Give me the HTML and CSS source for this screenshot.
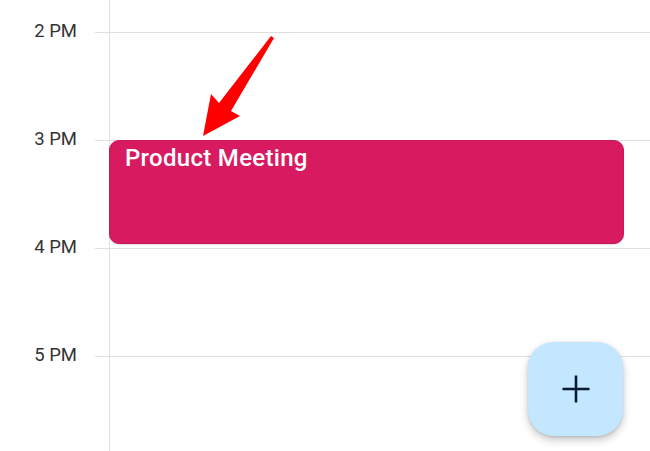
FILE: index.html
```html
<!DOCTYPE html>
<html>
<head>
<meta charset="utf-8">
<link rel="stylesheet" href="styles.css">
</head>
<body>
<div class="cal">
  <div class="hour spacer">
    <div class="label"></div>
    <div class="tick none"></div>
    <div class="slot none"></div>
  </div>
  <div class="hour">
    <div class="label">2 PM</div>
    <div class="tick"></div>
    <div class="slot"></div>
  </div>
  <div class="hour">
    <div class="label">3 PM</div>
    <div class="tick"></div>
    <div class="slot">
      <div class="event">Product Meeting</div>
    </div>
  </div>
  <div class="hour">
    <div class="label">4 PM</div>
    <div class="tick"></div>
    <div class="slot"></div>
  </div>
  <div class="hour">
    <div class="label">5 PM</div>
    <div class="tick"></div>
    <div class="slot"></div>
  </div>

  <svg class="arrow" width="650" height="451" viewBox="0 0 650 451">
    <polygon points="203,136 211,94 219,103 271,36 274,38 231,111 240,116" fill="#ff0000"/>
  </svg>

  <button class="fab" aria-label="Create">
    <svg width="30" height="30" viewBox="0 0 30 30">
      <path d="M15 1.5V28.5M1.5 15H28.5" stroke="#0b1d33" stroke-width="2.6" fill="none"/>
    </svg>
  </button>
</div>
</body>
</html>
```
FILE: styles.css
```css
html, body {
  margin: 0;
  padding: 0;
  background: #ffffff;
}
.cal {
  position: relative;
  width: 650px;
  height: 451px;
  overflow: hidden;
  font-family: Roboto, "Liberation Sans", sans-serif;
}
.hour {
  display: grid;
  grid-template-columns: 95px 14px 1fr;
  height: 108px;
}
.hour.spacer {
  height: 32px;
}
.label {
  font-size: 18.5px;
  line-height: 22px;
  height: 22px;
  margin-top: -12px;
  text-align: right;
  padding-right: 18px;
  color: #333333;
}
.tick {
  border-top: 1px solid #e0e0e0;
}
.slot {
  border-top: 1px solid #e0e0e0;
  border-left: 1px solid #e0e0e0;
  padding-right: 26px;
}
.tick.none, .slot.none {
  border-top: none;
}
.event {
  margin-top: -1px;
  margin-left: -1px;
  height: 104px;
  box-sizing: border-box;
  background: #d81b60;
  border: 1px solid #c8185a;
  border-radius: 10px;
  color: #ffffff;
  font-size: 24px;
  font-weight: 500;
  letter-spacing: 0.3px;
  line-height: 28px;
  padding: 3px 0 0 15px;
  box-shadow: 0 1px 1px rgba(0,0,0,0.12);
}
.arrow {
  position: absolute;
  left: 0;
  top: 0;
  pointer-events: none;
}
.fab {
  position: absolute;
  left: 528px;
  top: 342px;
  width: 95px;
  height: 94px;
  border: none;
  border-radius: 26px;
  background: #c2e7ff;
  box-shadow: 0 4px 8px rgba(0,0,0,0.22), 0 1px 3px rgba(0,0,0,0.12);
  display: flex;
  align-items: center;
  justify-content: center;
  padding: 0;
}
```
